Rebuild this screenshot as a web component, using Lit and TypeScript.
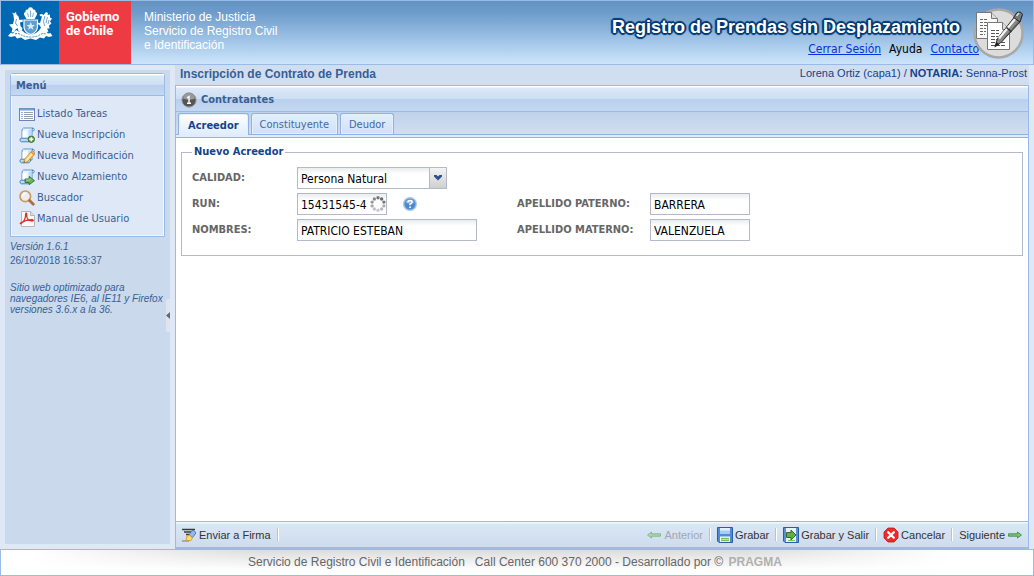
import { LitElement, html, css, svg } from "lit";
import { customElement, property, state } from "lit/decorators.js";

const scroll = svg`
  <path d="M4.500 1h9.300q1.700.3 1.500 2-.3 1-1.500.9H13V12H3V4q0-2.500 1.500-3z" fill="#eaf6ff" stroke="#4b8cc8" stroke-width=".9"/>
  <path d="M13.800 1q-1 .6-.8 2.800" stroke="#3f78b5" stroke-width=".9"/>
  <path d="M3.500 4h4v7.500h-4z" fill="#fff"/><path d="M9.500 2.500h3V11h-3z" fill="#b9ddf8"/>
  <path d="M1 12.500q.2-1.300 1.500-1.300H12q-1 3.300-2 3.600H2.300Q.9 14.500 1 12.500z" fill="#b4daf6" stroke="#3f78b5" stroke-width=".9"/>`;

const icons: Record<string, unknown> = {
  list: svg`<rect x=".5" y="2.500" width="15" height="12" fill="#fff" stroke="#6a83b8"/>
    <path d="M1 3.500h14" stroke="#6fa0e0" stroke-width="2"/>
    <path d="M5 6.500h9M5 8.500h9M5 10.500h9M5 12.500h9" stroke="#9aa0a8"/>
    <path d="M2 6.500h2M2 8.500h2M2 10.500h2M2 12.500h2" stroke="#86aee0"/>`,
  add: svg`${scroll}<circle cx="12.300" cy="12.300" r="3.200" fill="#6fac55" stroke="#2f6a2a" stroke-width=".9"/>
    <path d="M12.300 10.300v4M10.300 12.300h4" stroke="#fff" stroke-width="1.400"/>`,
  edit: svg`${scroll}<path d="m4.500 15 1.200-4 6.500-7 3 2.700-6.700 7z" fill="#ffcf5a" stroke="#d58a24" stroke-width=".9"/>
    <path d="m12.200 4 1.300-1.200 2.200 2-.6 1.900z" fill="#f2b48a" stroke="#c9703c" stroke-width=".7"/>
    <path d="m7 12.500 6-6.500" stroke="#fff2bd" stroke-width="1.200"/>
    <path d="m4.500 15 .6-2 1.400 1.400z" fill="#666"/>`,
  go: svg`${scroll}<path d="M6 10h4.200V7.300l5.300 4.400-5.300 4V13.500H6z" fill="#6db556" stroke="#2f7030" stroke-width=".9"/>
    <path d="M7 11h4V9.500" stroke="#b5dfa2" stroke-width=".8"/>`,
  search: svg`<circle cx="6.300" cy="6.300" r="5.300" fill="#e8eef6" stroke="#cf9a5c" stroke-width="1.700"/>
    <path d="M3.500 6a3.200 3.200 0 0 1 3-2.700" fill="none" stroke="#fff" stroke-width="1.300"/>
    <path d="m10.500 10.500 3.800 3.800" stroke="#a9703f" stroke-width="2.800" stroke-linecap="round"/>`,
  pdf: svg`<path d="M2.500.5h9l4 4v11h-13z" fill="#f9f9f9" stroke="#b5b5b5"/>
    <path d="M11.500.5v4h4" fill="#ddd" stroke="#b5b5b5"/>
    <path d="M1 12.800c3.500-1.600 5.800-5.500 5.700-9.800 0-1.500 1.400-1.200 1 .8-.6 3.500 2 6 5.300 6.200 1.800 0 1.600-1.400-.2-1.400-4 0-8 1.400-11.200 3.500z" stroke="#de2f2a" stroke-width="1.300"/>`,
  sign: svg`<path d="M1 2.500h13M3 5h7M5 7.500h3" stroke="#3a3a3a" stroke-width="1.300"/><path d="M1 14h7" stroke="#777"/>
    <path d="m8 8 3-4.500q2.500-.6 4 2.500l-3.500 4.500z" fill="#8fbaf0" stroke="#3f74bd" stroke-width=".9"/>
    <path d="m5 13.500.8-4L8.500 8l3 3-1.800 2.600z" fill="#ffdc70" stroke="#d09a26" stroke-width=".9"/>`,
  prev: svg`<path d="M5.500 5 1.500 8l4 3V9.200h9V6.800h-9z" fill="#a8d6a8" stroke="#80b886" stroke-width=".9"/>`,
  next: svg`<path d="M10.500 5l4 3-4 3V9.200h-9V6.800h9z" fill="#7cc674" stroke="#3a9146" stroke-width=".9"/>`,
  save: svg`<path d="M.5.5h15v15H2l-1.500-1.500z" fill="#4f8bd6" stroke="#2a5ca8"/>
    <path d="M3 1h10v6H3z" fill="#a9ccf4"/><path d="M3 1h10v2.500H3z" fill="#e2effd"/>
    <path d="M3 9.500h10V15H3z" fill="#fff"/><path d="M4 11.500h8M4 13.500h8" stroke="#7fbe50" stroke-width="1.300"/>`,
  saveGo: svg`<path d="M.5.5h15v15H2l-1.500-1.500z" fill="#5c8fd2" stroke="#2a5ca8"/>
    <path d="M3 1h10v14H3z" fill="#e8f2fc"/><path d="M5 13.500h7" stroke="#7fbe50"/>
    <path d="M3.500 5.500H8V3l5 5-5 5v-2.500H3.500z" fill="#63ad45" stroke="#2f6f2c"/>`,
  cancel: svg`<path d="M5 1h6l4 4v6l-4 4H5l-4-4V5z" fill="#ee2a2a" stroke="#c41616" stroke-width=".8"/>
    <path d="m5.200 5.200 5.600 5.600m0-5.600-5.600 5.600" stroke="#fff" stroke-width="2.300" stroke-linecap="round"/>`,
  one: svg`<circle cx="8" cy="8" r="7.200" fill="#555" stroke="#a5a5a5"/>
    <path d="M2 6.500a6 5.500 0 0 1 12 0q-6 2.500-12 0z" fill="#999"/>
    <path d="M6 5.800 8 4.500V11M6 11.300h4" stroke="#fff" stroke-width="1.400"/>`,
  help: svg`<circle cx="8" cy="8" r="6.300" fill="#4f8ad0" stroke="#a9c4e6" stroke-width="1.400"/>
    <path d="M3.500 6.500a4.600 3.800 0 0 1 9 0q-4.500 2-9 0z" fill="#8db6e6"/>
    <path d="M6 6.500q0-2 2-2t2 1.700Q10 7.500 8 8v1.200" stroke="#fff" stroke-width="1.500"/>
    <path d="M7.200 10.500h1.700v1.500H7.200z" fill="#fff"/>`,
};

@customElement("app-icon")
class AppIcon extends LitElement {
  @property() name = "";
  static styles = css`
    :host { display: block; flex: none; width: 16px; height: 16px; }
    svg { display: block; width: 100%; height: 100%; }
  `;
  render() {
    return html`<svg viewBox="0 0 16 16" fill="none" aria-hidden="true">${icons[this.name]}</svg>`;
  }
}

@customElement("app-header")
class AppHeader extends LitElement {
  static styles = css`
    :host {
      display: flex; box-sizing: border-box; height: 65px; border: 1px solid #99bbe8;
      background: linear-gradient(#6392c1, #6f9dcb 20%, #a3c6e8 65%, #cde5fb);
      color: #fff; font-family: "Liberation Sans", Arial, sans-serif;
    }
    .crest { width: 58px; background: #0168b3; padding: 6px 6px 0 6px; box-sizing: border-box; }
    .crest svg { display: block; width: 46px; height: 34px; }
    .gov {
      width: 72px; background: #ee3a43; box-sizing: border-box; padding: 9px 0 0 7px;
      font: bold 13px/14px Roboto, sans-serif;
    }
    .org { padding: 9px 0 0 13px; font-size: 12px; line-height: 14px; }
    .right { margin-left: auto; display: flex; padding: 6px 9px 0 0; }
    h1 {
      margin: 10px 13px 0 0; font-size: 18px; line-height: 20px; font-weight: bold; text-align: right;
      text-shadow: 1px 0 1px #053c75, -1px 0 1px #053c75, 0 1px 1px #053c75, 0 -1px 1px #053c75,
        1px 1px 1px #053c75, -1px -1px 1px #053c75, 1px -1px 1px #053c75, -1px 1px 1px #053c75,
        2px 0 1px #053c75, -2px 0 1px #053c75, 0 2px 1px #053c75, 0 -2px 1px #053c75;
    }
    nav {
      display: flex; justify-content: flex-end; gap: 8px; margin-right: -6px; color: #000;
      font: 12px/16px "DejaVu Sans Condensed", Tahoma, sans-serif; padding-top: 4px;
    }
    nav a { color: #0432e0; }
    nav a.plain { color: #000; text-decoration: none; }
    .badge { width: 52px; height: 52px; margin-left: -1px; }
  `;
  render() {
    return html`
      <div class="crest">
        <svg viewBox="0 0 46 34" fill="none" role="img" aria-label="Escudo de Chile">
          <path d="M19.500 12 17.500 8.500q-1.500-3 1-3.500-.5-3 2.500-2.500 0-2.300 2.500-2.300T26 2.500q3-.5 2.500 2.500 2.500.5 1 3.500L27.500 12z" fill="#fff"/>
          <path d="m20.500 6 1 4m2-6.500V10m3-4-1 4" stroke="#5c9fd0" stroke-width=".8"/>
          <path d="M17 13h13.500v7.500q-.8 5-6.800 7-6-2-6.700-7z" fill="#5d9fd2" stroke="#fff" stroke-width="1.200"/>
          <path d="m23.700 15 1.300 3h3l-2.500 2 1 3-2.800-2-2.700 2 1-3-2.500-2h3z" fill="#d9eaf6"/>
          <path d="M6.500 8 5 5.500l2 1 2-1.500.5 2.500 2 2 1 3.500 3-.5.5 2-3 1 .5 3.500 2 2.500-1 3-3-.5-1-3-2.500 2-.5 2-3 .5 1-4L4 20l-2-2.500 4-.5 1-4z" fill="#fff"/>
          <path d="M35 9.500 33 9l-.5-1.500L35 7l1.500 1L39 5l2 1-.5 2 2.500-.5 0 3 2 1-2 3 1.500 2-2.500 2 .5 3-2.500 0 1.500 3-3 1-3-1-2 1-1.500-2 2-3-2-3-2.500 0 1-2 2.500.5z" fill="#fff"/>
          <path d="m9.500 12-1 4 2 3m27.500-10-1.500 5 1 5m3-9-1.500 6m3-3-1 4" stroke="#4a94cc" stroke-width=".8"/>
          <path d="m1 29 2.500-3 2.500.5 3-3.500 3 1.500 3-1 3 2.500 5.500 2 5.500-2 3-2.500 3 1 3-1.500 3 3.500 2.500-.5L45.500 29l-3.500 1-3-1-2 2.500-4-1-4 2.500-5.500-1.500L18 33l-4-2.500-4 1L8 29l-4 1z" fill="#fff"/>
          <path d="M8 27q4-1.500 7 1.500 4 1.500 8.500 1.500t8.500-1.500q3-3 7-1.500" stroke="#3b8ac5" stroke-width="1" stroke-dasharray="2 1"/>
        </svg>
      </div>
      <div class="gov">Gobierno<br />de Chile</div>
      <div class="org">Ministerio de Justicia<br />Servicio de Registro Civil<br />e Identificación</div>
      <div class="right">
        <div>
          <h1>Registro de Prendas sin Desplazamiento</h1>
          <nav>
            <a href="#salir">Cerrar Sesión</a><a class="plain" href="#ayuda">Ayuda</a><a href="#contacto">Contacto</a>
          </nav>
        </div>
        <svg class="badge" viewBox="0 0 52 52" fill="none" aria-hidden="true">
          <circle cx="26.500" cy="26.500" r="24" fill="#dcdcdc" stroke="#a8a8a8" stroke-width="2.500"/>
          <path d="M4.500 5.500h15l6 6v20h-21z" fill="#fafafa" stroke="#777"/>
          <path d="M19.500 5.500v6h6" fill="#ddd" stroke="#777"/>
          <path d="M8 12.500h8M8 15.500h9M8 18.500h7M8 21.500h6M8 24.500h6M8 27.500h5" stroke="#666" stroke-dasharray="3 1"/>
          <path d="M15.500 15.500h15l7 7v20h-22z" fill="#fff" stroke="#777"/>
          <path d="M30.500 15.500v7h7" fill="#ddd" stroke="#777"/>
          <path d="M19 23.500h8M19 26.500h8M19 29.500h7M19 32.500h6M19 35.500h15M19 38.500h15" stroke="#555" stroke-dasharray="4 1"/>
          <path d="m23 39.500 2.500-8L42 10.500l6 4.500L29.500 35z" fill="#8a8a8a" stroke="#333"/>
          <path d="m27 31.500 16.500-20" stroke="#f4f4f4" stroke-width="2.200"/>
          <path d="m30 34 16.500-19" stroke="#555"/>
          <path d="m41.500 10.500 3.500-5q4-1.500 5.500 2l-2.500 7.500z" fill="#777" stroke="#222"/>
          <path d="M44.500 9 47 6" stroke="#ddd" stroke-width="1.500"/>
          <path d="m34.500 20.500 5 4.500" stroke="#333" stroke-width="1.500"/>
          <path d="m22.500 40.500 2-5.500 3 2.500z" fill="#222"/>
        </svg>
      </div>
    `;
  }
}

@customElement("app-sidebar")
class AppSidebar extends LitElement {
  private items = [
    ["list", "Listado Tareas"],
    ["add", "Nueva Inscripción"],
    ["edit", "Nueva Modificación"],
    ["go", "Nuevo Alzamiento"],
    ["search", "Buscador"],
    ["pdf", "Manual de Usuario"],
  ];
  static styles = css`
    :host {
      display: block; position: relative; box-sizing: border-box; margin: 5px; padding: 3px 5px;
      background: #cad9ec; color: #385f95; font: 10px/11px "Liberation Sans", Arial, sans-serif;
    }
    .menu {
      border: 1px solid #99bbe8; border-radius: 3px 3px 0 0; background: #dfe8f6;
      box-shadow: inset 0 0 0 1px #f2f7fd;
      font-family: "DejaVu Sans Condensed", Tahoma, sans-serif;
    }
    h2 {
      margin: 0; padding: 2px 5px 0; font-size: 11px; line-height: 19px; color: #385f95;
      border-bottom: 1px solid #99bbe8;
      background: linear-gradient(#fff 1px, #dce8f7 2px, #cddff4 50%, #b9cfee 51%, #c5d8f1);
    }
    ul { list-style: none; margin: 0; padding: 7px 8px; }
    li a {
      display: flex; align-items: center; gap: 2px; height: 21px; color: #385f95; font-size: 11px;
      line-height: 14px; text-decoration: none; white-space: nowrap;
    }
    p { margin: 0; }
    .version { padding: 4px 0 3px; }
    .date { padding-bottom: 16px; }
    .note { margin-right: -6px; }
    .split {
      position: absolute; right: 0; top: 229px; width: 4px; height: 33px; padding: 0; border: 0;
      border-radius: 2px 0 0 2px; background: #dde5f0;
    }
    .split svg { display: block; width: 4px; height: 7px; }
  `;
  render() {
    return html`
      <section class="menu">
        <h2>Menú</h2>
        <ul>
          ${this.items.map(([icon, text]) => html`<li><a href="#${icon}"><app-icon name=${icon}></app-icon>${text}</a></li>`)}
        </ul>
      </section>
      <p class="version"><em>Versión 1.6.1</em></p>
      <p class="date">26/10/2018 16:53:37</p>
      <p class="note"><em>Sitio web optimizado para<br />navegadores IE6, al IE11 y Firefox<br />versiones 3.6.x a la 36.</em></p>
      <button class="split" aria-label="Contraer menú"><svg viewBox="0 0 4 7"><path d="M4 0v7L0 3.500z" fill="#667"/></svg></button>
    `;
  }
}

@customElement("contract-form")
class ContractForm extends LitElement {
  @state() private tab = "Acreedor";
  static styles = css`
    :host {
      display: flex; flex-direction: column; min-width: 0;
      font-family: "DejaVu Sans Condensed", Tahoma, sans-serif; font-size: 11px;
    }
    .top {
      display: flex; justify-content: space-between; box-sizing: border-box; height: 20px; padding: 0 2px 0 5px;
      background: #d0def0; color: #385f95; font: bold 12px/18px "Liberation Sans", Arial, sans-serif;
    }
    .top h2 { margin: 0; font-size: 12px; }
    .user { color: #15428b; font-size: 11px; font-weight: normal; line-height: 17px; }
    .panel { flex: 1; display: flex; flex-direction: column; border: 1px solid #99bbe8; background: #fff; }
    .head {
      display: flex; align-items: center; gap: 4px; box-sizing: border-box; height: 26px; padding: 2px 0 0 5px; color: #385f95;
      border-bottom: 1px solid #99bbe8;
      background: linear-gradient(#fff 1px, #dce8f7 2px, #cddff4 50%, #b9cfee 51%, #c5d8f1);
    }
    .head h3 { margin: 0; font-size: 11px; }
    .tabs {
      display: flex; align-items: flex-end; gap: 2px; height: 22px; padding: 0 2px;
      background: linear-gradient(#c0d2ea, #d0def0); border-bottom: 1px solid #8db2e3;
    }
    .tabs button {
      height: 21px; padding: 1px 8px 0; border: 1px solid #8db2e3; border-bottom: 0; border-radius: 3px 3px 0 0;
      background: linear-gradient(#e4effc, #cfe0f6); color: #416aa3; font: 11px/19px "DejaVu Sans Condensed", Tahoma, sans-serif;
      box-shadow: inset 0 0 0 1px #e6f0fc;
    }
    .tabs button[aria-selected="true"] {
      height: 23px; margin-bottom: -2px; padding: 0 9px; background: linear-gradient(#fff, #deecfd);
      color: #15428b; font-weight: bold;
    }
    .bar { height: 2px; background: #deecfd; border-bottom: 1px solid #8db2e3; }
    .body { flex: 1; padding: 7px 5px; }
    fieldset {
      min-width: 0; margin: 0; padding: 8px 10px 14px; border: 1px solid #b5b8c8;
    }
    legend { margin: 0; padding: 0 2px; line-height: 14px; font-weight: bold; color: #15428b; }
    .grid { display: grid; grid-template-columns: 105px 220px 133px 1fr; row-gap: 4px; align-items: center; }
    label { font-weight: bold; color: #666; line-height: 16px; white-space: nowrap; }
    .cell { display: flex; align-items: center; }
    .wide { grid-column: 2 / -1; }
    input, select {
      box-sizing: border-box; height: 22px; padding: 1px 3px 0; border: 1px solid #b5b8c8; border-radius: 0;
      margin: 0; color: #000; font: 12px/18px "DejaVu Sans Condensed", Tahoma, sans-serif;
      background: linear-gradient(#e9eded, #fff 6px);
    }
    .s { width: 100px; }
    .m { width: 180px; }
    .combo { display: grid; width: 150px; }
    .combo > * { grid-area: 1 / 1; }
    select { appearance: none; width: 100%; }
    .arrow {
      justify-self: end; width: 16px; height: 20px; margin: 0 1px; z-index: 1; pointer-events: none; align-self: center;
      background: linear-gradient(#f4f4f4, #cfcfcf); border-left: 1px solid #b5b8c8;
    }
    .run { display: grid; width: 90px; margin-right: 15px; }
    .run > * { grid-area: 1 / 1; }
    .run input { width: 100%; }
    .spin { justify-self: end; align-self: center; width: 16px; height: 16px; margin-right: 1px; z-index: 1; }
    .help { padding: 0; border: 0; background: none; }
    .tools {
      display: flex; align-items: center; height: 25px; padding: 0 5px; border-top: 1px solid #99bbe8;
      border-bottom: 1px solid #99bbe8; background: linear-gradient(#f2f7fd 1px, #dae6f4 2px, #cddcee);
    }
    .tools button {
      display: flex; align-items: center; gap: 2px; height: 20px; padding: 0; border: 0; background: none; color: #333;
      font: 11px/16px "Liberation Sans", Arial, sans-serif; white-space: nowrap;
    }
    .tools button:disabled { color: #9fa8b3; }
    .sep { width: 1px; height: 13px; margin: 0 6px; background: #98c8ff; border-right: 1px solid #fff; }
    .grow { flex: 1; }
  `;
  render() {
    const sep = html`<span class="sep"></span>`;
    return html`
      <div class="top">
        <h2>Inscripción de Contrato de Prenda</h2>
        <span class="user">Lorena Ortiz (capa1) / <b>NOTARIA:</b> Senna-Prost</span>
      </div>
      <div class="panel">
        <div class="head"><app-icon name="one"></app-icon><h3>Contratantes</h3></div>
        <div class="tabs" role="tablist">
          ${["Acreedor", "Constituyente", "Deudor"].map(
            (t) => html`<button role="tab" aria-selected=${this.tab === t ? "true" : "false"} @click=${() => (this.tab = t)}>${t}</button>`
          )}
        </div>
        <div class="bar"></div>
        <div class="body">
          <fieldset>
            <legend>Nuevo Acreedor</legend>
            <div class="grid">
              <label for="calidad">CALIDAD:</label>
              <div class="wide combo">
                <select id="calidad"><option>Persona Natural</option><option>Persona Jurídica</option></select>
                <svg class="arrow" viewBox="0 0 16 20" aria-hidden="true"><path d="M4 7h2.500L8 8.500 9.500 7H12v1.500L8 12.500l-4-4z" fill="#2b4f8f"/></svg>
              </div>
              <label for="run">RUN:</label>
              <div class="cell">
                <div class="run">
                  <input id="run" value="15431545-4" />
                  <svg class="spin" viewBox="0 0 16 16" aria-hidden="true">
                    ${Array.from({ length: 10 }, (_, i) => {
                      const a = (i / 10) * Math.PI * 2;
                      const tone = ["#777", "#6b6b6b", "#777", "#b5aeae", "#bbb", "#ccc", "#c4c4c4", "#aaa", "#999", "#888"][i];
                      return svg`<circle cx=${8 + 6.2 * Math.sin(a)} cy=${8 - 6.2 * Math.cos(a)} r="1.700" fill=${tone} />`;
                    })}
                  </svg>
                </div>
                <button class="help" aria-label="Ayuda"><app-icon name="help"></app-icon></button>
              </div>
              <label for="paterno">APELLIDO PATERNO:</label>
              <input class="s" id="paterno" value="BARRERA" />
              <label for="nombres">NOMBRES:</label>
              <input class="m" id="nombres" value="PATRICIO ESTEBAN" />
              <label for="materno">APELLIDO MATERNO:</label>
              <input class="s" id="materno" value="VALENZUELA" />
            </div>
          </fieldset>
        </div>
        <div class="tools">
          <button><app-icon name="sign"></app-icon>Enviar a Firma</button>${sep}
          <span class="grow"></span>
          <button disabled><app-icon name="prev"></app-icon>Anterior</button>${sep}
          <button><app-icon name="save"></app-icon>Grabar</button>${sep}
          <button><app-icon name="saveGo"></app-icon>Grabar y Salir</button>${sep}
          <button><app-icon name="cancel"></app-icon>Cancelar</button>${sep}
          <button>Siguiente<app-icon name="next"></app-icon></button>
        </div>
      </div>
    `;
  }
}

@customElement("app-root")
class AppRoot extends LitElement {
  static styles = css`
    :host { display: flex; flex-direction: column; height: 100vh; background: #dfe8f6; }
    main { flex: 1; display: grid; grid-template-columns: 175px 1fr; padding-right: 5px; min-height: 0; }
    footer {
      display: flex; justify-content: center; box-sizing: border-box; height: 27px; padding-right: 4px; border: 1px solid #99bbe8;
      background: linear-gradient(90deg, #fff 3%, transparent 25%, transparent 72%, #fff 92%), linear-gradient(#dcdcdc, #fff 80%);
      color: #666; font: 12px/24px "Liberation Sans", Arial, sans-serif; white-space: pre;
    }
    footer b { color: #b0b0b0; margin-left: 2px; }
  `;
  render() {
    return html`
      <app-header></app-header>
      <main>
        <app-sidebar></app-sidebar>
        <contract-form></contract-form>
      </main>
      <footer>Servicio de Registro Civil e Identificación   Call Center 600 370 2000 - Desarrollado por © <b>PRAGMA</b></footer>
    `;
  }
}
